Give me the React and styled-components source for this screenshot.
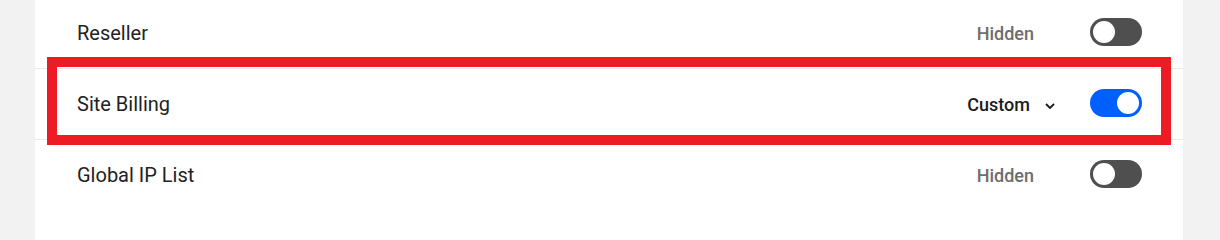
import React from 'react';
import styled, { createGlobalStyle } from 'styled-components';

const Global = createGlobalStyle`
  html, body {
    margin: 0;
    height: 100%;
    overflow: hidden;
    background: #f2f2f2;
    font-family: Roboto, "Liberation Sans", sans-serif;
  }
  #root {
    height: 100%;
  }
`;

const Panel = styled.div`
  width: 1148px;
  min-height: calc(100% + 2px);
  margin: -2px 0 0 35px;
  background: #fff;
`;

const Row = styled.div`
  position: relative;
  display: flex;
  align-items: center;
  height: 70px;
  padding: 0 41px 0 42px;
  border-bottom: 1px solid #ececec;

  &:last-child {
    border-bottom: none;
  }
`;

const Label = styled.div`
  flex: 1;
  font-size: 20px;
  color: #222;
`;

const Value = styled.div`
  display: flex;
  align-items: center;
  font-size: 18px;
  font-weight: 500;
  color: ${(p) => (p.$active ? '#1b1b1b' : '#6e6e6e')};
  margin-right: ${(p) => (p.$active ? '35px' : '56px')};
`;

const Chevron = styled.svg`
  margin-left: 15px;
  margin-top: 3px;
`;

const Toggle = styled.div`
  position: relative;
  width: 52px;
  height: 28px;
  margin-bottom: 3px;
  border-radius: 14px;
  background: ${(p) => (p.$on ? '#0060ff' : '#4f4f4f')};

  &::after {
    content: '';
    position: absolute;
    top: 3px;
    left: ${(p) => (p.$on ? '27px' : '3px')};
    width: 22px;
    height: 22px;
    border-radius: 50%;
    background: #fff;
  }
`;

const Highlight = styled.div`
  position: absolute;
  left: 12px;
  top: -12px;
  width: 1124px;
  height: 88px;
  box-sizing: border-box;
  border: 10px solid #ed1c24;
  pointer-events: none;
`;

const rows = [
  { label: 'Reseller', value: 'Hidden', on: false },
  { label: 'Site Billing', value: 'Custom', on: true, highlight: true },
  { label: 'Global IP List', value: 'Hidden', on: false },
];

export default function App() {
  return (
    <>
      <Global />
      <Panel>
        {rows.map((r) => (
          <Row key={r.label}>
            <Label>{r.label}</Label>
            <Value $active={r.on}>
              {r.value}
              {r.on && (
                <Chevron width="10" height="6" viewBox="0 0 10 6">
                  <path d="M1 1l4 4 4-4" fill="none" stroke="#1b1b1b" strokeWidth="1.8" />
                </Chevron>
              )}
            </Value>
            <Toggle $on={r.on} />
            {r.highlight && <Highlight />}
          </Row>
        ))}
      </Panel>
    </>
  );
}
